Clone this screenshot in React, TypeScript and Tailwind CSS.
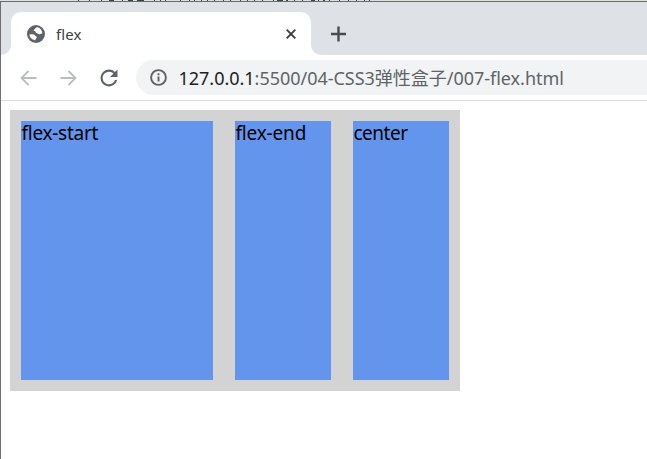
import React from "react";

const fragments: [number, number][] = [[78,1],[89,1],[101,1],[109,5],[122,1],[128,5],[137,7],[154,1],[160,1],[165,1],[180,1],[189,1],[194,1],[201,1],[207,1],[214,1],[223,1],[230,1],[240,1],[247,1],[254,1],[262,1],[273,1],[277,6],[286,2],[294,1],[302,1],[311,4],[318,1],[323,2],[329,1],[339,1],[348,1],[356,1],[364,1],[369,1]];

function Box({ label, size }: { label: string; size: string }) {
  return (
    <div className={"h-[259px] bg-[#6495ed] pl-[0.5px] text-[19px] leading-[25px] text-black " + size}>
      {label}
    </div>
  );
}

export default function App() {
  return (
    <div className="flex h-[459px] w-[647px] flex-col overflow-hidden bg-white font-['Noto_Sans','Noto_Sans_CJK_SC',sans-serif]">
      <div className="relative h-px shrink-0 bg-[#dce0de]">
        {fragments.map(([x, w]) => (
          <i key={x} className="absolute top-0 h-px bg-[#354354]" style={{ left: x, width: w }} />
        ))}
      </div>
      <div className="flex min-h-0 flex-1 flex-col border-t border-l border-t-[#6b6e6d] border-l-[#6f6f6f]">
        <div className="flex h-[53px] shrink-0 items-end bg-[#dee1e6]">
          <div className="h-[43px] w-[10px] bg-white"><div className="h-full rounded-br-[10px] bg-[#dee1e6]" /></div>
          <div className="flex h-[43px] w-[300px] items-center rounded-t-[10px] bg-white pl-[16px]">
            <svg width="18" height="18" viewBox="0 0 18 18">
              <circle cx="9" cy="9" r="9" fill="#5f6368" />
              <path fill="#fff" d="M10.500 2.300C8.300 2.500 8.400 3.900 7.200 4.500c-1 .5-.5 1.500.4 1.600 1.300.1.700 1.700 1.900 1.900 1.300.2 1.200 1.300 2.400 1.300 1.300 0 1.300-1 3.400-.9C15.100 5.400 13.500 2.900 10.500 2.300zM2.400 9.600c2-.5 4.800-.3 5.900 1.200.6.9 1.700.7 1.500 1.800-.2 1-1.200 1-1.500 2.700C5 14.900 2.600 12.700 2.400 9.600z" />
            </svg>
            <span className="ml-[11px] w-[230px] text-[15px] leading-5 tracking-[0.1px] text-[#3c4043]">flex</span>
            <svg width="10" height="10" viewBox="0 0 10 10" stroke="#3c4043" strokeWidth="1.900"><path d="M.7.7l8.600 8.600M9.300.7L.7 9.300" /></svg>
          </div>
          <div className="h-[43px] w-[10px] bg-white"><div className="h-full rounded-bl-[10px] bg-[#dee1e6]" /></div>
          <svg className="mb-[13px] ml-[10px]" width="15" height="16" viewBox="0 0 15 16" stroke="#484b4f" strokeWidth="2.400"><path d="M7.500 .5v15M0 8h15" /></svg>
        </div>
        <div className="flex h-[46px] shrink-0 items-center border-b border-[#d9dadc] bg-white pl-[19px]">
          <svg width="17" height="16" viewBox="0 0 17 16" fill="none" stroke="#babcbe" strokeWidth="1.800"><path d="M16.500 8H2M8.500 1L1.500 8l7 7" /></svg>
          <svg className="ml-[23px]" width="17" height="16" viewBox="0 0 17 16" fill="none" stroke="#babcbe" strokeWidth="1.800"><path d="M.5 8h14.500M8.500 1l7 7-7 7" /></svg>
          <svg className="ml-[23px]" width="18" height="18" viewBox="3.500 3.500 17 17" fill="#5f6368"><path d="M17.650 6.350A7.958 7.958 0 0 0 12 4a8 8 0 1 0 7.730 10h-2.080A6 6 0 1 1 12 6c1.660 0 3.140.69 4.220 1.780L13 11h7V4z" /></svg>
          <div className="ml-[18px] flex h-[35px] flex-1 items-center rounded-l-full bg-[#f1f3f4] pl-[14px]">
            <svg width="17" height="17" viewBox="0 0 17 17" fill="none" stroke="#5f6368" strokeWidth="1.900"><circle cx="8.500" cy="8.500" r="7.400" /><path d="M8.500 7.500v5M8.500 4.300v2" /></svg>
            <span className="ml-[11.500px] whitespace-nowrap text-[18px] leading-6 tracking-[-0.02px] text-[#5f6368]"><span className="text-[#202124]">127.0.0.1</span>:5500/04-CSS3弹性盒子/007-flex.html</span>
          </div>
        </div>
        <div className="mt-[9px] ml-[9px] flex h-[281px] w-[450px] gap-[22px] bg-[#d3d3d3] p-[11px]">
          <Box label="flex-start" size="w-[192px] tracking-[-0.27px]" />
          <Box label="flex-end" size="w-[96px] tracking-[-0.18px]" />
          <Box label="center" size="w-[96px] tracking-[-0.5px]" />
        </div>
      </div>
    </div>
  );
}
